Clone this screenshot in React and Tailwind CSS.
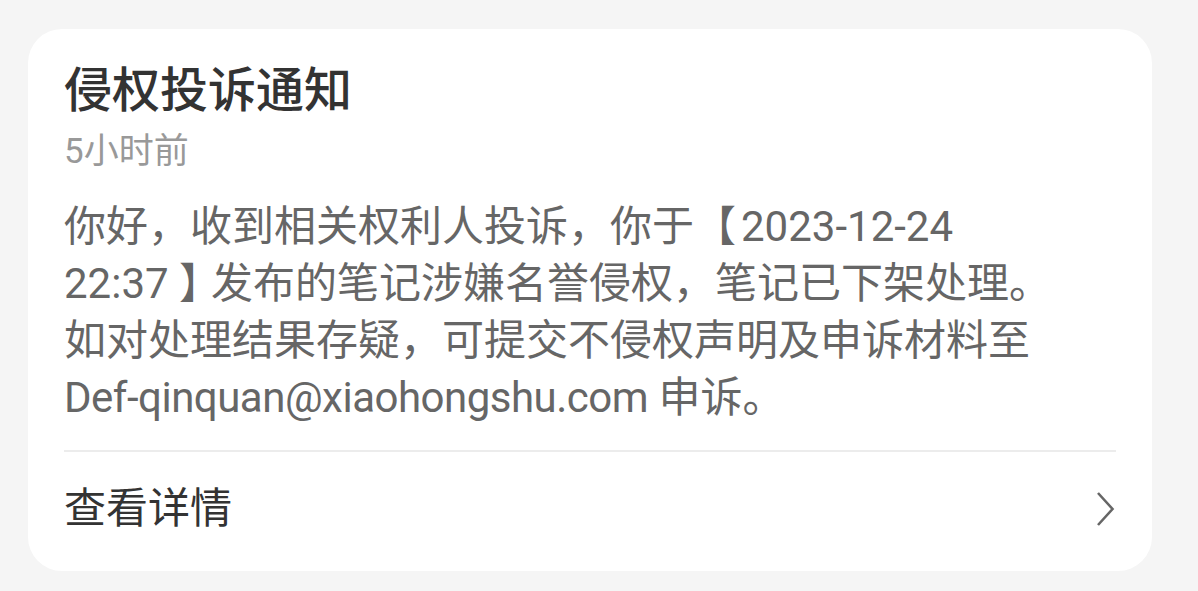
export default function App() {
  const font = { fontFamily: 'Roboto, "Noto Sans CJK SC", sans-serif' };
  return (
    <div className="w-[1198px] h-[591px] bg-[#f5f5f5] pt-[29px] pl-[28px]" style={font}>
      <div className="w-[1124px] h-[542px] bg-white rounded-[34px] flex flex-col">
        <div className="px-[36px] pt-[38px]">
          <div className="text-[48px] leading-[48px] font-medium text-[#333333]">侵权投诉通知</div>
          <div className="mt-[20px] text-[35px] leading-[34px] text-[#999999]">5小时前</div>
          <div className="mt-[29px] text-[42px] leading-[57px] text-[#666666]">
            <div className="whitespace-nowrap">你好，收到相关权利人投诉，你于【<span className="ml-[5px]">2023-12-24</span></div>
            <div className="whitespace-nowrap">22:37 <span className="tracking-[-10px]">】</span>发布的笔记涉嫌名誉侵权，笔记已下架处理。</div>
            <div className="whitespace-nowrap">如对处理结果存疑，可提交不侵权声明及申诉材料至</div>
            <div className="whitespace-nowrap"><span className="tracking-[-0.5px]">Def-qinquan@xiaohongshu.com</span> 申诉。</div>
          </div>
          <div className="mt-[24px] h-[2px] bg-[#ececec]" />
        </div>
        <div className="px-[36px] pt-[36px] flex items-center justify-between">
          <div className="text-[42px] leading-[42px] text-[#333333]">查看详情</div>
          <svg width="20" height="36" viewBox="0 0 20 36" fill="none">
            <polyline points="2,2 16.5,18 2,34" stroke="#666666" strokeWidth="2.6" strokeLinejoin="miter" />
          </svg>
        </div>
      </div>
    </div>
  );
}
